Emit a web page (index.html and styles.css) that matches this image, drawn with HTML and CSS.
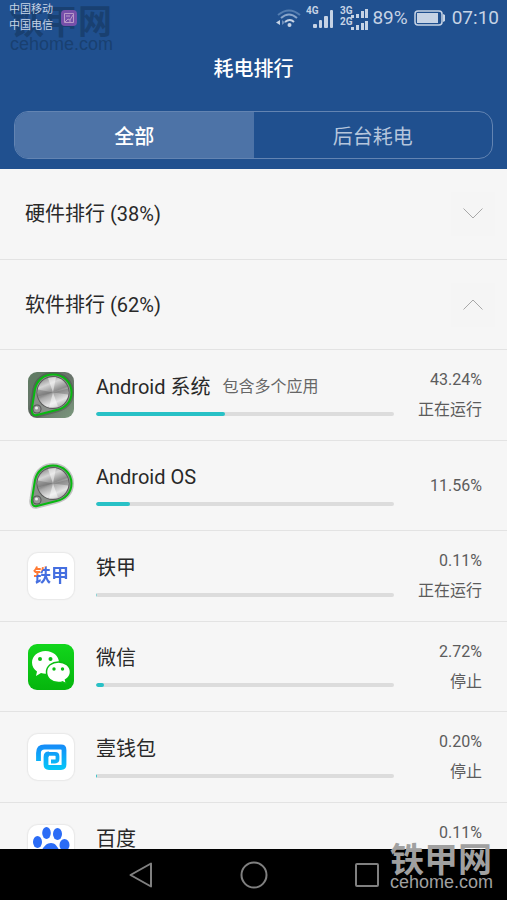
FILE: index.html
```html
<!DOCTYPE html>
<html lang="zh-CN">
<head>
  <meta charset="UTF-8" />
  <meta name="viewport" content="width=device-width, initial-scale=1.0"/>
  <title>耗电排行</title>
  <link rel="stylesheet" href="styles.css">
</head>
<body>

  <header class="header">
    <div class="watermark watermark-top">
      <span class="watermark-name">铁甲网</span>
      <span class="watermark-url">cehome.com</span>
    </div>

    <div class="status-bar">
      <div class="carriers">
        <span>中国移动</span>
        <span>中国电信</span>
      </div>
      <svg class="notice" width="16" height="16" viewBox="0 0 16 16">
        <rect width="16" height="16" rx="4" fill="#7650aa"/>
        <path d="M3.500 3.500h9v9h-9zM4 12l3-3 2 1 3-5M9 10v2M5 6h2M8 5v2" fill="none" stroke="#b99bc9"/>
      </svg>
      <div class="indicators">
        <svg width="26" height="20" viewBox="0 0 26 20" fill="none" stroke-width="2">
          <path d="M2 7q11-9 22 0" stroke="#547db0"/>
          <path d="M5 10q8-7 16 0" stroke="#89a5ca"/>
          <path d="M9 14q5-4 9 0" stroke="#c6d3e5"/>
          <circle cx="13.500" cy="17" r="2" fill="#c6d3e5"/>
          <path d="M4 12v5l-4-2.500z" fill="#c6d3e5"/>
          <path d="M6 12v5l3-2.500z" fill="#6f90bc"/>
        </svg>
        <svg class="signal" width="28" height="24" viewBox="0 0 28 24">
          <text x="0" y="8">4G</text>
          <g>
            <rect x="7" y="18" width="4" height="4" rx="1"/>
            <rect x="13" y="14" width="3" height="8" rx="1"/>
            <rect x="18" y="10" width="4" height="12" rx="1"/>
            <rect x="24" y="4" width="3" height="18" rx="1"/>
          </g>
        </svg>
        <svg class="signal signal-dual" width="29" height="24" viewBox="0 0 29 24">
          <text x="0" y="8">3G</text>
          <text x="0" y="19">2G</text>
          <path d="M11 9h3v3h-3zM16 8h3v4h-3zM21 5h3v7h-3zM25 3h3v9h-3zM11 21h3v3h-3zM16 19h3v5h-3zM21 17h3v7h-3zM25 15h3v9h-3z"/>
        </svg>
        <span class="percent">89%</span>
        <svg class="battery" width="32" height="16" viewBox="0 0 32 16">
          <rect x="1" y="1" width="27" height="14" rx="3" fill="none" stroke="#c6d3e5" stroke-width="1.500"/>
          <path d="M29 4l2 1v6l-2 1z" fill="#c6d3e5"/>
          <rect x="3" y="3" width="21" height="10" fill="#c6d3e5"/>
        </svg>
        <span class="time">07:10</span>
      </div>
    </div>

    <h1>耗电排行</h1>

    <div class="tabs">
      <button class="tab active">全部</button>
      <button class="tab">后台耗电</button>
    </div>
  </header>

  <main class="list">
    <section class="row group">
      <h2>硬件排行 (38%)</h2>
      <button class="toggle" aria-label="展开">
        <svg width="20" height="12" viewBox="0 0 20 12"><path d="M0.500 0.500L10 10l9.500-9.500"/></svg>
      </button>
    </section>

    <section class="row group">
      <h2>软件排行 (62%)</h2>
      <button class="toggle" aria-label="收起">
        <svg width="20" height="12" viewBox="0 0 20 12"><path d="M0.500 10.500L10 1l9.500 9.500"/></svg>
      </button>
    </section>

    <article class="row">
      <svg class="icon" viewBox="0 0 46 46">
        <defs>
          <linearGradient id="green" x2="1" y2="1">
            <stop offset="0" stop-color="#5f7d62"/>
            <stop offset="0.500" stop-color="#68726a"/>
            <stop offset="1" stop-color="#7b997d"/>
          </linearGradient>
          <linearGradient id="metal" x1="0.300" x2="0.700" y2="1">
            <stop offset="0" stop-color="#929292"/>
            <stop offset="0.220" stop-color="#d5d5d5"/>
            <stop offset="0.480" stop-color="#8d8d8d"/>
            <stop offset="0.550" stop-color="#aaa"/>
            <stop offset="0.800" stop-color="#e4e4e4"/>
            <stop offset="1" stop-color="#a9a9a9"/>
          </linearGradient>
        </defs>
        <rect width="46" height="46" rx="9" fill="url(#green)"/>
        <g id="knob">
          <path d="M7 17C9 8 16 2.500 25 2.500c10.500 0 18.500 8 18.500 18 0 9-6 15.500-15 17.500L9 43c-4 1-6-2-5-7z" fill="none" stroke="#222" stroke-opacity="0.250" stroke-width="5"/>
          <path d="M7 17C9 8 16 2.500 25 2.500c10.500 0 18.500 8 18.500 18 0 9-6 15.500-15 17.500L9 43c-4 1-6-2-5-7z" fill="#8b908b" stroke="#08b811" stroke-width="2"/>
          <circle cx="25" cy="20.500" r="16.500" fill="#5a5a5a"/>
          <circle cx="25" cy="20.500" r="15.500" fill="url(#metal)"/>
          <path d="M25 20.500l15-4v6zM25 20.500l-15 4v-7z" fill="#555" opacity="0.350"/>
          <path d="M25 20.500L20 6l8-1zM25 20.500l5 14-9 1z" fill="#fff" opacity="0.500"/>
          <circle cx="9" cy="37" r="4.500" fill="#555"/>
          <circle cx="9" cy="37" r="3.500" fill="#999"/>
          <circle cx="8.500" cy="36" r="1.500" fill="#eee"/>
        </g>
      </svg>
      <div class="usage">
        <h3>Android 系统 <small>包含多个应用</small></h3>
        <div class="bar"><div class="fill" style="width: 43.24%"></div></div>
      </div>
      <div class="info">
        <span>43.24%</span>
        <span>正在运行</span>
      </div>
    </article>

    <article class="row">
      <svg class="icon" viewBox="0 0 46 46"><use href="#knob"/></svg>
      <div class="usage">
        <h3>Android OS</h3>
        <div class="bar"><div class="fill" style="width: 11.56%"></div></div>
      </div>
      <div class="info">
        <span>11.56%</span>
      </div>
    </article>

    <article class="row">
      <div class="icon tile tiejia"><span>铁甲</span></div>
      <div class="usage">
        <h3>铁甲</h3>
        <div class="bar"><div class="fill low" style="width: 0.11%"></div></div>
      </div>
      <div class="info">
        <span>0.11%</span>
        <span>正在运行</span>
      </div>
    </article>

    <article class="row">
      <svg class="icon" viewBox="0 0 46 46">
        <defs>
          <linearGradient id="wechat" x2="0" y2="1">
            <stop offset="0" stop-color="#12d61c"/>
            <stop offset="1" stop-color="#05b50d"/>
          </linearGradient>
        </defs>
        <rect width="46" height="46" rx="9" fill="url(#wechat)"/>
        <path d="M17.500 7C10 7 4 12 4 18.500c0 4 2 7 5 9L8 32l5-3c2 .6 4 .8 6 .6 8 0 12-5 12-11C31 12 25 7 17.500 7z" fill="#fff"/>
        <path d="M30.500 18C24 18 18.500 22 18.500 28s5 10.500 12 10.500c1.500 0 3-.2 4-.6l4 2-1-4c3-2 5-5 5-8C42.500 22 37 18 30.500 18z" fill="#fff" stroke="#0abe12" stroke-width="1.500"/>
        <g fill="#0abe12">
          <circle cx="12" cy="15" r="2"/><circle cx="22.500" cy="15" r="2"/>
          <circle cx="26" cy="25" r="1.700"/><circle cx="34.500" cy="25" r="1.700"/>
        </g>
      </svg>
      <div class="usage">
        <h3>微信</h3>
        <div class="bar"><div class="fill" style="width: 2.72%"></div></div>
      </div>
      <div class="info">
        <span>2.72%</span>
        <span>停止</span>
      </div>
    </article>

    <article class="row">
      <div class="icon tile">
        <svg width="46" height="46" viewBox="0 0 46 46">
          <defs>
            <linearGradient id="wallet" gradientUnits="userSpaceOnUse" x1="0" y1="10" x2="0" y2="36">
              <stop offset="0" stop-color="#1689f8"/>
              <stop offset="1" stop-color="#05c8f8"/>
            </linearGradient>
          </defs>
          <g fill="none" stroke="url(#wallet)">
            <path d="M10.500 27v-8q0-6 6-6H33q3 0 3 3v14.500q0 3-3 3H21q-3 0-3-3V23q0-3 3-3" stroke-width="4.800"/>
            <path d="M20 19.800h7q2.500 0 2.500 2.500V25q0 2.500-2.500 2.500h-4" stroke-width="3.800"/>
          </g>
        </svg>
      </div>
      <div class="usage">
        <h3>壹钱包</h3>
        <div class="bar"><div class="fill" style="width: 0.20%"></div></div>
      </div>
      <div class="info">
        <span>0.20%</span>
        <span>停止</span>
      </div>
    </article>

    <article class="row">
      <div class="icon tile">
        <svg width="46" height="46" viewBox="0 0 46 46" fill="#2b6cf6">
          <ellipse cx="9.500" cy="17" rx="4.500" ry="6"/>
          <ellipse cx="18.500" cy="8" rx="4.300" ry="6"/>
          <ellipse cx="29.500" cy="9" rx="4.500" ry="6"/>
          <ellipse cx="36.500" cy="20" rx="5" ry="6"/>
          <path d="M23 18c-5 0-7 4-10 8-4 4-6 6-5 11 1 5 6 6 15 5 9 1 14 0 15-5 1-5-2-7-6-11-3-4-4-8-9-8z"/>
        </svg>
      </div>
      <div class="usage">
        <h3>百度</h3>
        <div class="bar"><div class="fill low" style="width: 0.11%"></div></div>
      </div>
      <div class="info">
        <span>0.11%</span>
        <span>停止</span>
      </div>
    </article>
  </main>

  <nav class="nav-bar">
    <button aria-label="返回">
      <svg width="28" height="28" viewBox="0 0 28 28"><path d="M24 2.500v23L3.500 14z"/></svg>
    </button>
    <button aria-label="主页">
      <svg width="28" height="28" viewBox="0 0 28 28"><circle cx="14" cy="14" r="12.500"/></svg>
    </button>
    <button aria-label="最近任务">
      <svg width="28" height="28" viewBox="0 0 28 28"><rect x="3" y="3" width="22" height="22" rx="1"/></svg>
    </button>
    <div class="watermark watermark-bottom">
      <span class="watermark-name">铁甲网</span>
      <span class="watermark-url">cehome.com</span>
    </div>
  </nav>

</body>
</html>
```
FILE: styles.css
```css
* {
  box-sizing: border-box;
}

body {
  margin: 0;
  height: 100vh;
  display: flex;
  flex-direction: column;
  background-color: #f6f6f6;
  color: #292929;
  font-family: Roboto, "Noto Sans CJK SC", sans-serif;
}

h1, h2, h3 {
  margin: 0;
  font-size: 20px;
  font-weight: normal;
  line-height: 24px;
}

button {
  padding: 0;
  border: 0;
  background: none;
  font: inherit;
  cursor: pointer;
}

svg {
  display: block;
}

/* header */

.header {
  position: relative;
  flex: none;
  padding-bottom: 10px;
  background-color: #20508f;
  color: #fff;
}

.status-bar {
  position: relative;
  display: flex;
  align-items: center;
  height: 35px;
  padding: 0 8px 0 9px;
  color: #c6d3e5;
}

.carriers {
  display: flex;
  flex-direction: column;
  font-size: 11px;
  line-height: 16px;
}

.notice {
  margin-left: 8px;
}

.indicators {
  display: flex;
  align-items: center;
  margin-left: auto;
  font-size: 19px;
}

.signal {
  margin-left: 4px;
  fill: #c6d3e5;
  font-size: 10px;
  font-weight: bold;
}

.signal-dual {
  margin-left: 6px;
}

.percent {
  margin-left: 3px;
}

.battery {
  margin: 0 6px;
}

h1 {
  margin: 22px 0 30px;
  font-weight: 500;
  text-align: center;
}

.tabs {
  display: flex;
  height: 48px;
  margin: 0 14px;
  border: 1px solid #6384b2;
  border-radius: 14px;
  overflow: hidden;
}

.tab {
  flex: 1;
  color: #b5c5dc;
  font-size: 20px;
}

.tab.active {
  background-color: #4d73a7;
  color: #fff;
  font-weight: 500;
}

/* list */

.list {
  flex: 1;
  min-height: 0;
  overflow: hidden;
}

.row {
  display: flex;
  align-items: center;
  height: 91px;
  padding: 0 25px 0 28px;
  border-bottom: 1px solid #e3e3e3;
}

.row:nth-child(even) {
  height: 90px;
}

.group {
  justify-content: space-between;
  padding: 0 12px 0 25px;
}

.toggle {
  display: flex;
  align-items: center;
  justify-content: center;
  width: 44px;
  height: 44px;
  background-color: #f5f5f5;
}

.toggle path {
  fill: none;
  stroke: #a8a8a8;
}

.icon {
  flex: none;
  width: 46px;
  height: 46px;
  margin-right: 22px;
}

.tile {
  border-radius: 10px;
  background-color: #fff;
  box-shadow: 0 0 1px 1px #e9e9e9;
}

.tiejia {
  font-size: 18px;
  font-weight: bold;
  line-height: 46px;
  text-align: center;
}

/* orange corner on the first character */
.tiejia span {
  background: linear-gradient(135deg, #ff7b35 10px, #456fe0 10px);
  background-clip: text;
  color: transparent;
}

.usage {
  flex: 1;
}

h3 {
  display: flex;
  align-items: center;
}

small {
  margin-left: 12px;
  color: #666;
  font-size: 16px;
}

.bar {
  height: 4px;
  margin-top: 13px;
  border-radius: 2px;
  background-color: #dcdcdc;
  overflow: hidden;
}

.fill {
  min-width: 1px;
  height: 100%;
  border-radius: 2px;
  background-color: #28c1c6;
}

.fill.low {
  opacity: 0.5;
}

.info {
  display: flex;
  flex-direction: column;
  width: 88px;
  color: #5c5c5c;
  font-size: 16px;
  line-height: 30px;
  text-align: right;
}

/* bottom navigation */

.nav-bar {
  position: relative;
  flex: none;
  display: flex;
  align-items: center;
  justify-content: center;
  gap: 85px;
  height: 51px;
  background-color: #000;
}

.nav-bar svg {
  fill: none;
  stroke: #808080;
  stroke-width: 2;
  stroke-linejoin: round;
}

/* watermark */

.watermark {
  position: absolute;
  display: flex;
  flex-direction: column;
  font-family: "Liberation Sans", "Noto Sans CJK SC", sans-serif;
}

.watermark-name {
  font-size: 34px;
  font-weight: bold;
  line-height: 30px;
}

.watermark-url {
  font-size: 18px;
  line-height: 14px;
}

.watermark-top {
  top: 7px;
  left: 10px;
  color: #194071;
}

.watermark-bottom {
  right: 14px;
  bottom: 11px;
  color: #a0a0a0;
}
```
